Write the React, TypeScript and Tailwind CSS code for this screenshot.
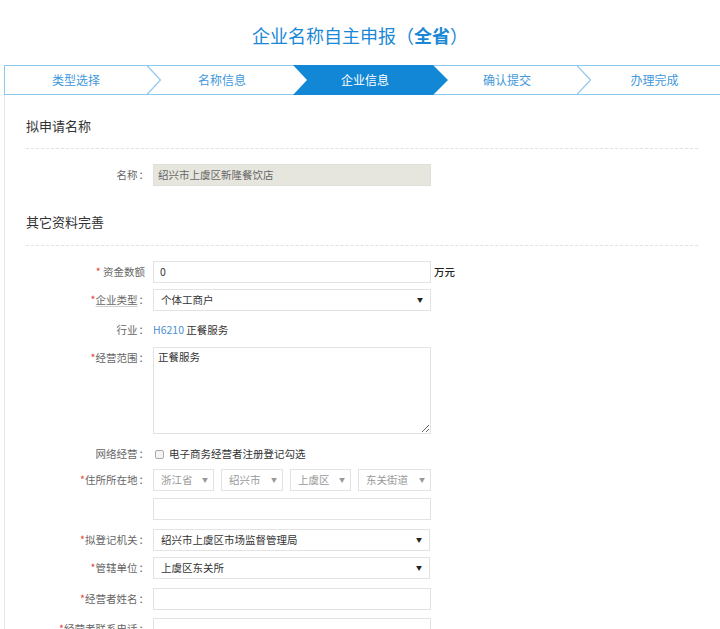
import React from "react";

const font = { fontFamily: '"Microsoft YaHei","Noto Sans CJK SC","Noto Sans",sans-serif' };

function Chevron() {
  return (
    <svg className="absolute right-[-15px] top-[-1px] z-10" width="16" height="30" viewBox="0 0 16 30">
      <polyline points="0.5,0 14.5,15 0.5,30" fill="none" stroke="#8ec8ec" strokeWidth="1.2" />
    </svg>
  );
}

function Label({ req, text, colon = true, under = false }: { req?: boolean; text: string; colon?: boolean; under?: boolean }) {
  return (
    <div className="w-[123px] shrink-0 text-right text-[10.5px] text-[#666] leading-[22px] whitespace-nowrap">
      {req && <span className="text-[#e8433a]">*</span>}
      <span className={under ? "underline decoration-[#d0d0d0] underline-offset-2" : ""}>{text}</span>
      {colon && <span className="ml-[1px]">：</span>}
    </div>
  );
}

function Arrow({ gray }: { gray?: boolean }) {
  return <span className={"text-[6px] leading-none " + (gray ? "text-[#999]" : "text-[#222]")}>▼</span>;
}

function SelectBox({ value, w = "w-[278px]", gray }: { value: string; w?: string; gray?: boolean }) {
  return (
    <div className={`${w} h-[22px] border border-[#e3e3e3] flex items-center justify-between pl-[7px] ${gray ? "pr-[5px] text-[#999]" : "pr-[7px] text-[#333]"} text-[10.5px]`}>
      <span>{value}</span>
      <Arrow gray={gray} />
    </div>
  );
}

function InputBox({ value = "" }: { value?: string }) {
  return (
    <div className="w-[278px] h-[22px] border border-[#e3e3e3] flex items-center px-[6px] text-[10.5px] text-[#333]">{value}</div>
  );
}

function Row({ children, mt }: { children: React.ReactNode; mt: string }) {
  return <div className={`flex items-start gap-[4px] ${mt}`}>{children}</div>;
}

export default function App() {
  return (
    <div className="w-[720px] h-[629px] overflow-hidden bg-white" style={font}>
      <div className="h-[65px] pt-[5px] flex items-center justify-center text-[18px] text-[#1a88d6]">
        企业名称自主申报（<span className="font-bold">全省</span>）
      </div>

      <div className="ml-[4px] h-[30px] border-y border-l border-[#8ec8ec] flex text-[12px] text-[#3f98db]">
        <div className="relative w-[142px] shrink-0 flex items-center justify-center">
          类型选择
          <Chevron />
        </div>
        <div className="relative w-[146px] shrink-0 flex items-center justify-center pl-[4px]">名称信息</div>
        <div className="relative w-[140px] shrink-0 flex items-center justify-center text-white pl-[4px]">
          <svg className="absolute left-0 top-[-1px]" width="156" height="30" viewBox="0 0 156 30">
            <polygon points="0,0 140,0 155,15 140,30 0,30 14,15" fill="#1287d6" />
          </svg>
          <span className="relative z-20">企业信息</span>
        </div>
        <div className="relative w-[144px] shrink-0 flex items-center justify-center pl-[4px]">
          确认提交
          <Chevron />
        </div>
        <div className="relative flex-1 flex items-center justify-center pl-[12px]">办理完成</div>
      </div>

      <div className="ml-[4px] border-l border-[#e6e6e6] pl-[21px] pr-[22px] h-[600px]">
        <div className="pt-[21px] h-[41px] text-[13px] leading-[20px] text-[#333]">拟申请名称</div>
        <div className="mt-[12px] border-t border-dashed border-[#e2e2e2]" />
        <Row mt="mt-[15px]">
          <Label text="名称" />
          <div className="w-[278px] h-[22px] bg-[#e6e6df] border border-[#e0e0da] flex items-center px-[4px] text-[10.5px] text-[#666]">绍兴市上虞区新隆餐饮店</div>
        </Row>

        <div className="mt-[26px] h-[20px] text-[13px] leading-[20px] text-[#333]">其它资料完善</div>
        <div className="mt-[13px] border-t border-dashed border-[#e2e2e2]" />

        <Row mt="mt-[15px]">
          <div className="w-[123px] shrink-0 text-right pr-[4px] text-[10.5px] text-[#666] leading-[22px]">
            <span className="text-[#e8433a]">*</span> 资金数额
          </div>
          <InputBox value="0" />
          <span className="text-[10.5px] leading-[22px] text-[#222] font-medium -ml-[1px]">万元</span>
        </Row>
        <Row mt="mt-[6px]">
          <Label req text="企业类型" under />
          <SelectBox value="个体工商户" />
        </Row>
        <Row mt="mt-[8px]">
          <Label text="行业" />
          <div className="text-[10.5px] leading-[22px] text-[#333]">
            <span className="text-[#4a8fd2]">H6210</span> 正餐服务
          </div>
        </Row>
        <Row mt="mt-[6px]">
          <Label req text="经营范围" />
          <textarea
            readOnly
            defaultValue="正餐服务"
            className="w-[278px] h-[87px] border border-[#e3e3e3] px-[4px] py-[1px] text-[10.5px] text-[#333] outline-none resize"
            style={font}
          />
        </Row>
        <Row mt="mt-[9px]">
          <Label text="网络经营" />
          <div className="flex items-center gap-[5px] text-[10.5px] leading-[22px] text-[#333]">
            <span className="ml-[2px] w-[9px] h-[9px] border border-[#aaa] rounded-[2px] bg-[#f4f4f4]" />
            电子商务经营者注册登记勾选
          </div>
        </Row>
        <Row mt="mt-[4px]">
          <Label req text="住所所在地" />
          <div className="flex gap-[7px]">
            <SelectBox value="浙江省" w="w-[61px]" gray />
            <SelectBox value="绍兴市" w="w-[62px]" gray />
            <SelectBox value="上虞区" w="w-[61px]" gray />
            <SelectBox value="东关街道" w="w-[73px]" gray />
          </div>
        </Row>
        <Row mt="mt-[7px]">
          <div className="w-[123px] shrink-0" />
          <InputBox />
        </Row>
        <Row mt="mt-[9px]">
          <Label req text="拟登记机关" />
          <SelectBox value="绍兴市上虞区市场监督管理局" w="w-[277px]" />
        </Row>
        <Row mt="mt-[6px]">
          <Label req text="管辖单位" />
          <SelectBox value="上虞区东关所" w="w-[277px]" />
        </Row>
        <Row mt="mt-[9px]">
          <Label req text="经营者姓名" />
          <InputBox />
        </Row>
        <Row mt="mt-[8px]">
          <Label req text="经营者联系电话" />
          <InputBox />
        </Row>
      </div>
    </div>
  );
}
